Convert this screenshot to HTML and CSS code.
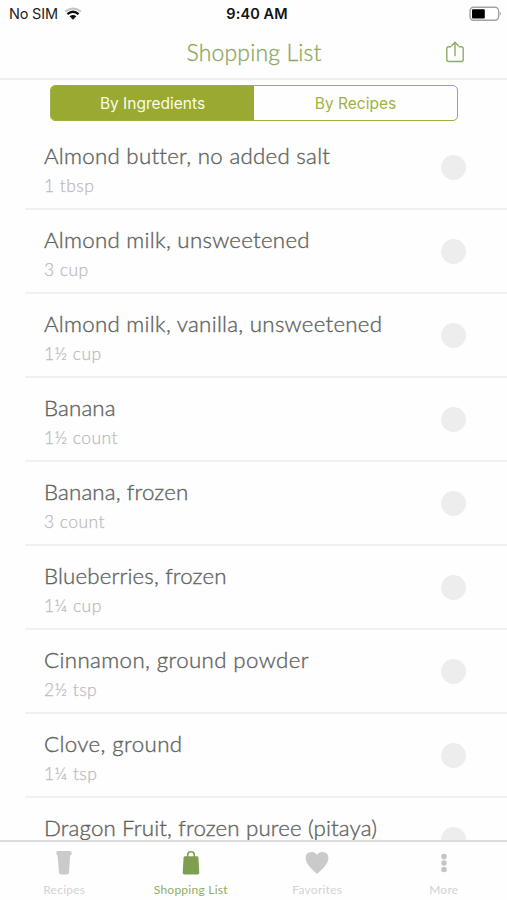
FILE: index.html
```html
<!DOCTYPE html>
<html lang="en">
<head>
<meta charset="utf-8">
<title>Shopping List</title>
<link rel="stylesheet" href="styles.css">
</head>
<body>
<div class="app">
  <div class="status">
    <div class="carrier"><span>No SIM</span>
      <svg width="18" height="14" viewBox="0 0 18 14" fill="none">
        <path d="M1.2 4.6Q9-1.5 16.8 4.6" stroke="#c4c4c4" stroke-width="2"/>
        <path d="M3.4 7.2Q9 2.2 14.6 7.2" stroke="#111" stroke-width="2.3"/>
        <path d="M5.6 9.3Q9 6.5 12.4 9.3L9 12.8Z" fill="#111"/>
      </svg>
    </div>
    <div class="time">9:40 AM</div>
    <div class="power">
      <svg width="33" height="16" viewBox="0 0 33 16">
        <rect x="1" y="1.2" width="28.6" height="13" rx="3.6" fill="#fff" stroke="#a3a3a3" stroke-width="1.4"/>
        <rect x="3" y="3.2" width="12.8" height="9.2" rx="1" fill="#000"/>
        <path d="M30.8 5.5Q33 7.7 30.8 10Z" fill="#a3a3a3"/>
      </svg>
    </div>
  </div>
  <header class="nav">
    <h1>Shopping List</h1>
    <svg class="share" width="18" height="22" viewBox="0 0 18 22" fill="none" stroke="#8fab63" stroke-width="1.4">
      <path d="M5.2 5.7H2.7Q.8 5.7.8 7.6V18.6Q.8 20.5 2.7 20.5H15.3Q17.2 20.5 17.2 18.6V7.6Q17.2 5.7 15.3 5.7H12.8M9 15.2V1.4M5.4 4.9L9 1.3L12.6 4.9"/>
    </svg>
  </header>
  <main class="content">
    <div class="segments"><div class="segment active">By Ingredients</div><div class="segment">By Recipes</div></div>
    <ul class="list">
      <li><div><p class="name">Almond butter, no added salt</p><p class="amount">1 tbsp</p></div><i class="check"></i></li>
      <li><div><p class="name">Almond milk, unsweetened</p><p class="amount">3 cup</p></div><i class="check"></i></li>
      <li><div><p class="name">Almond milk, vanilla, unsweetened</p><p class="amount">1½ cup</p></div><i class="check"></i></li>
      <li><div><p class="name snug">Banana</p><p class="amount">1½ count</p></div><i class="check"></i></li>
      <li><div><p class="name snug">Banana, frozen</p><p class="amount">3 count</p></div><i class="check"></i></li>
      <li><div><p class="name snug">Blueberries, frozen</p><p class="amount">1¼ cup</p></div><i class="check"></i></li>
      <li><div><p class="name loose">Cinnamon, ground powder</p><p class="amount">2½ tsp</p></div><i class="check"></i></li>
      <li><div><p class="name loose">Clove, ground</p><p class="amount">1¼ tsp</p></div><i class="check"></i></li>
      <li><div><p class="name snug">Dragon Fruit, frozen puree (pitaya)</p></div><i class="check"></i></li>
    </ul>
  </main>
  <nav class="tabs">
    <div class="tab">
      <svg width="24" height="26" viewBox="0 0 24 26" fill="#cacaca"><path d="M5.3 1H18.2Q19.5 1 19.5 2.6V5H18.2L17 22.5Q16.8 24.5 15 24.5H9Q7.2 24.5 7 22.5L5.5 5H4.5V2.4Q4.5 1 5.3 1Z"/></svg>
      <span>Recipes</span>
    </div>
    <div class="tab current">
      <svg width="24" height="26" viewBox="0 0 24 26"><path d="M8.7 7V5Q8.7 1.8 12 1.8T15.3 5V7" fill="none" stroke="#7f9f50" stroke-width="1.6"/><path d="M6 6.2H18Q19.2 6.2 19.4 7.6L20.3 22.5Q20.4 24.5 18.5 24.5H5.5Q3.6 24.5 3.7 22.5L4.6 7.6Q4.8 6.2 6 6.2Z" fill="#7f9f50"/></svg>
      <span>Shopping List</span>
    </div>
    <div class="tab">
      <svg width="24" height="26" viewBox="0 0 24 26" fill="#cacaca"><path d="M12 24Q9.6 22 5.5 17.7Q.6 12.5.6 8.3Q.6 1.9 6.6 1.9Q10.3 1.9 12 5Q13.7 1.9 17.4 1.9Q23.4 1.9 23.4 8.3Q23.4 12.5 18.5 17.7Q14.4 22 12 24Z"/></svg>
      <span>Favorites</span>
    </div>
    <div class="tab">
      <svg width="24" height="26" viewBox="0 0 24 26" fill="#c5c5c5"><circle cx="12" cy="6.6" r="2.8"/><circle cx="12" cy="13" r="2.8"/><circle cx="12" cy="19.5" r="2.8"/></svg>
      <span>More</span>
    </div>
  </nav>
</div>
</body>
</html>
```
FILE: styles.css
```css
* { box-sizing: border-box; }
body { margin: 0; background: #fefefe; font-family: Lato, sans-serif; font-variant-ligatures: none; }
h1, p, ul { margin: 0; padding: 0; font-weight: 400; }
.app { width: 507px; height: 900px; display: flex; flex-direction: column; overflow: hidden; }
.status { height: 27px; flex: none; display: grid; grid-template-columns: 1fr auto 1fr; align-items: center; padding: 1px 5px 0 9px; font: 14.5px/26px Inter, sans-serif; color: #222; }
.carrier { display: flex; align-items: center; gap: 6px; letter-spacing: -.2px; }
.time { font-weight: 600; color: #111; letter-spacing: .1px; padding-left: 3px; }
.power { display: flex; justify-content: flex-end; }
.nav { height: 53px; flex: none; border-bottom: 2px solid #efefef; display: grid; grid-template-columns: 1fr auto 1fr; align-items: center; padding: 0 43px 2px 43px; }
.nav h1 { grid-column: 2; font-size: 23px; line-height: 30px; color: #8ba75c; font-weight: 300; -webkit-text-stroke: .3px; letter-spacing: .15px; padding-left: 1px; white-space: nowrap; }
.share { justify-self: end; }
.content { flex: 1; min-height: 0; overflow: hidden; padding-top: 5px; }
.segments { width: 408px; height: 36px; margin-left: 50px; display: flex; border: 1.5px solid #9fb044; border-radius: 5px; overflow: hidden; font: 15.5px/35px Inter, sans-serif; letter-spacing: 0; color: #9eb33e; text-align: center; }
.segment { flex: 1; }
.active { background: #9aa932; color: #fbfce9; }
.list { list-style: none; margin: 5px 0 0 25px; }
.list li { height: 84px; display: flex; justify-content: space-between; align-items: flex-start; border-bottom: 2px solid #f0f0f1; padding: 15px 41px 0 19px; }
.name { font-size: 22.3px; line-height: 30px; color: #60635e; font-weight: 300; -webkit-text-stroke: .35px; letter-spacing: .27px; white-space: nowrap; }
.snug { letter-spacing: .14px; }
.loose { letter-spacing: .38px; }
.amount { font-size: 17.5px; line-height: 24px; margin-top: 3px; color: #babbc1; font-weight: 300; -webkit-text-stroke: .25px; letter-spacing: .45px; }
.check { width: 25px; height: 25px; margin-top: 14px; border-radius: 50%; background: #ededed; flex: none; }
.tabs { height: 60px; flex: none; border-top: 2px solid #dcdcdc; display: grid; grid-template-columns: repeat(4, 1fr); padding: 8px 0 0 1px; }
.tab { display: flex; flex-direction: column; align-items: center; color: #d3d3d3; font-size: 12px; line-height: 16px; gap: 6px; }
.tab span { letter-spacing: .25px; }
.current { color: #91ab65; }
```
